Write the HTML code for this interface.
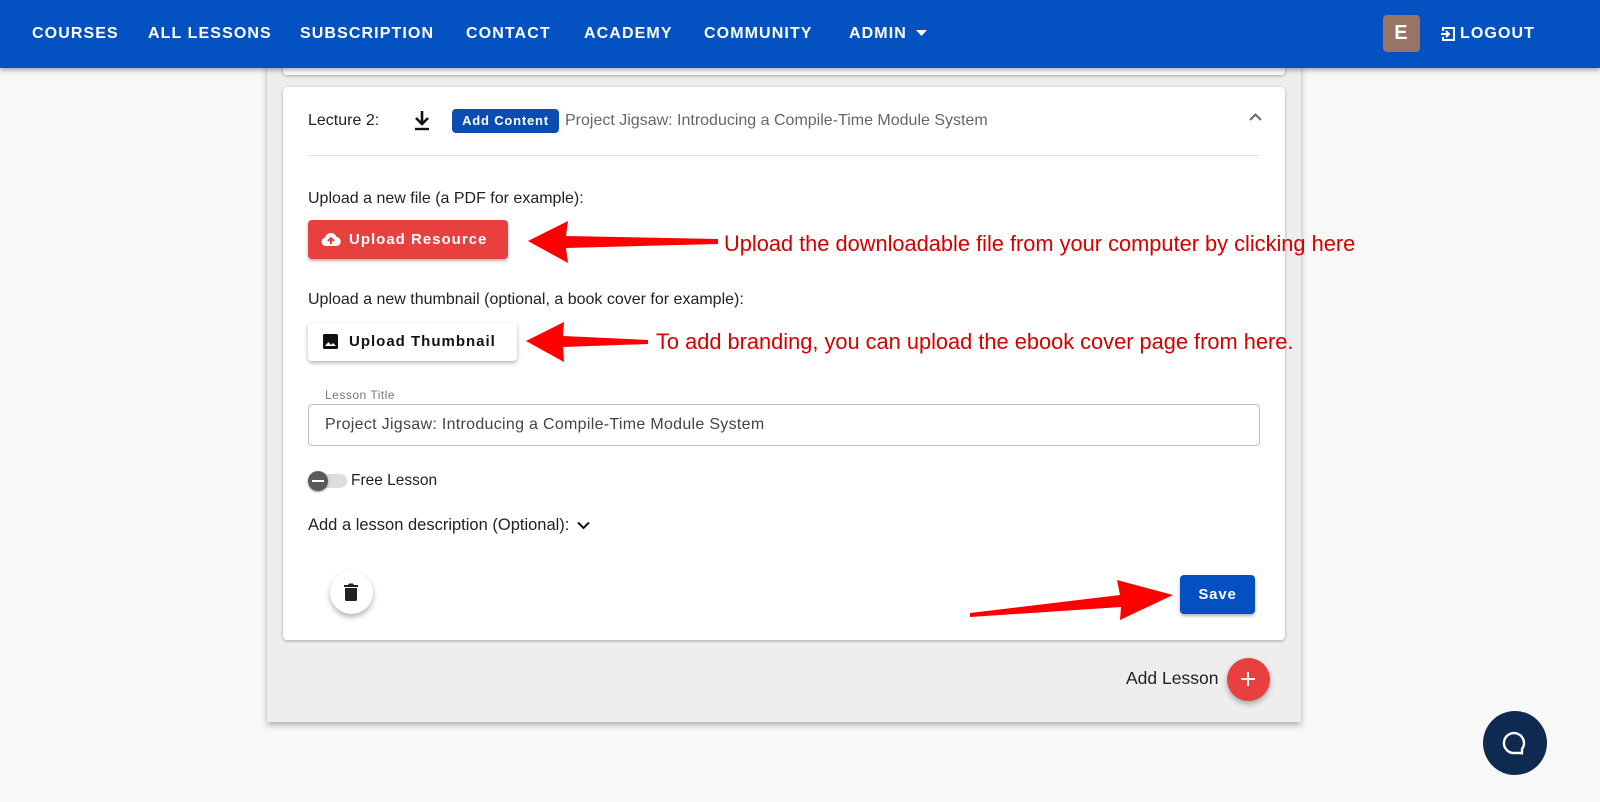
<!DOCTYPE html>
<html><head><meta charset="utf-8"><style>
*{box-sizing:border-box;margin:0;padding:0}
body{width:1600px;height:802px;overflow:hidden;background:#f8f8f8;font-family:"Liberation Sans",sans-serif;position:relative;color:#222}
.a{position:absolute;white-space:nowrap}
.nav{position:absolute;left:0;top:0;width:1600px;height:68px;background:#0451c1;box-shadow:0 2px 5px rgba(0,0,0,.35);z-index:5}
.nav .a{color:#fff;font-weight:bold;font-size:16px;letter-spacing:1.1px;top:25px}
.panel{position:absolute;left:267px;top:60px;width:1034px;height:662px;background:#eee;box-shadow:0 3px 6px rgba(0,0,0,.3)}
.card{position:absolute;background:#fff;border-radius:4px;box-shadow:0 1px 3px rgba(0,0,0,.3)}
.t15{font-size:16px}
.red{color:#d40000;font-size:21.8px}
</style></head><body>
<div class="nav">
<div class="a" style="left:32px">COURSES</div>
<div class="a" style="left:148px">ALL LESSONS</div>
<div class="a" style="left:300px">SUBSCRIPTION</div>
<div class="a" style="left:466px">CONTACT</div>
<div class="a" style="left:584px">ACADEMY</div>
<div class="a" style="left:704px">COMMUNITY</div>
<div class="a" style="left:849px">ADMIN</div>
<svg class="a" style="left:916px;top:30px" width="11" height="7"><path d="M0 0h11L5.5 6z" fill="#fff"/></svg>
<div class="a" style="left:1383px;top:15px;width:37px;height:37px;background:#977463;border-radius:4px;color:#fff;font-size:20px;text-align:center;line-height:37px">E</div>
<svg class="a" style="left:1440px;top:26px" width="16" height="16" viewBox="0 0 16 16"><path d="M3 5V2h11v12H3v-3" fill="none" stroke="#fff" stroke-width="2"/><path d="M1 8h8M6 5l3 3-3 3" fill="none" stroke="#fff" stroke-width="2"/></svg>
<div class="a" style="left:1460px">LOGOUT</div>
</div>
<div class="panel"></div>
<div class="card" style="left:283px;top:40px;width:1002px;height:35px"></div>
<div class="card" style="left:283px;top:87px;width:1002px;height:553px"></div>
<div class="a t15" style="left:308px;top:112px">Lecture 2:</div>
<svg class="a" style="left:413px;top:110px" width="18" height="22" viewBox="0 0 18 22"><path d="M9 1v12M3 8l6 6 6-6" fill="none" stroke="#111" stroke-width="2.6"/><path d="M2 19h14" stroke="#111" stroke-width="2.4"/></svg>
<div class="a" style="left:452px;top:109px;width:107px;height:24px;background:#0b4cb1;border-radius:4px;color:#fff;font-size:13px;font-weight:bold;letter-spacing:.8px;text-align:center;line-height:24px">Add Content</div>
<div class="a t15" style="left:565px;top:112px;color:#666">Project Jigsaw: Introducing a Compile-Time Module System</div>
<svg class="a" style="left:1249px;top:113px" width="13" height="9"><path d="M1 7l5.5-5.5L12 7" fill="none" stroke="#666" stroke-width="2"/></svg>
<div class="a" style="left:308px;top:155px;width:951px;height:1px;background:#e2e2e2"></div>
<div class="a t15" style="left:308px;top:190px">Upload a new file (a PDF for example):</div>
<div class="a" style="left:308px;top:220px;width:200px;height:39px;background:#e8403f;border-radius:4px;box-shadow:0 2px 3px rgba(0,0,0,.3);color:#fff;font-size:15px;font-weight:bold;letter-spacing:1px;line-height:39px;padding-left:41px">Upload Resource</div>
<svg class="a" style="left:321px;top:232px" width="20" height="15" viewBox="0 0 20 15"><path d="M5 14h10a4.5 4.5 0 0 0 .5-9A6 6 0 0 0 4 5.5 4.3 4.3 0 0 0 5 14z" fill="#fff"/><path d="M10 12V6M7 9l3-3 3 3" fill="none" stroke="#e8403f" stroke-width="2"/></svg>
<svg class="a" style="left:520px;top:215px" width="210" height="55"><path d="M8 26L48 6 46 21 198 24 198 29 46 33 48 48z" fill="#f00"/></svg>
<div class="a red" style="left:724px;top:231px">Upload the downloadable file from your computer by clicking here</div>
<div class="a t15" style="left:308px;top:291px">Upload a new thumbnail (optional, a book cover for example):</div>
<div class="a" style="left:308px;top:323px;width:209px;height:38px;background:#fff;border-radius:4px;box-shadow:0 2px 4px rgba(0,0,0,.3);color:#111;font-size:15px;font-weight:bold;letter-spacing:1px;line-height:38px;padding-left:41px">Upload Thumbnail</div>
<svg class="a" style="left:323px;top:334px" width="15" height="15" viewBox="0 0 15 15"><rect width="15" height="15" rx="1.5" fill="#111"/><path d="M2 12l3.5-4 2.5 3 2-2 3 3z" fill="#fff"/></svg>
<svg class="a" style="left:520px;top:317px" width="135" height="50"><path d="M6 24L44 5 43 19 128 23 128 27 43 30 44 45z" fill="#f00"/></svg>
<div class="a red" style="left:656px;top:329px">To add branding, you can upload the ebook cover page from here.</div>
<div class="a" style="left:308px;top:404px;width:952px;height:42px;border:1px solid #bbb;border-radius:4px"></div>
<div class="a" style="left:320px;top:388px;background:#fff;padding:0 5px;font-size:12px;color:#777;letter-spacing:.5px">Lesson Title</div>
<div class="a t15" style="left:325px;top:416px;color:#444;letter-spacing:.3px">Project Jigsaw: Introducing a Compile-Time Module System</div>
<div class="a" style="left:312px;top:474px;width:35px;height:14px;background:#ddd;border-radius:7px"></div>
<div class="a" style="left:308px;top:471px;width:20px;height:20px;background:#5a5a5a;border-radius:50%;box-shadow:0 1px 2px rgba(0,0,0,.4)"></div>
<div class="a" style="left:312px;top:480px;width:12px;height:2px;background:#fff"></div>
<div class="a" style="left:351px;top:472px;font-size:15.5px">Free Lesson</div>
<div class="a" style="left:308px;top:516px;font-size:16.5px">Add a lesson description (Optional):</div>
<svg class="a" style="left:577px;top:521px" width="13" height="9"><path d="M1 1.5l5.5 5.5L12 1.5" fill="none" stroke="#111" stroke-width="2"/></svg>
<div class="a" style="left:330px;top:571px;width:43px;height:43px;background:#fff;border-radius:50%;box-shadow:0 3px 6px rgba(0,0,0,.3)"></div>
<svg class="a" style="left:344px;top:583px" width="14" height="18" viewBox="0 0 14 18"><path d="M0 2h4l1-1.5h4L10 2h4v2H0z M1 5h12v11.5a1.5 1.5 0 0 1-1.5 1.5h-9A1.5 1.5 0 0 1 1 16.5z" fill="#222"/></svg>
<svg class="a" style="left:965px;top:575px" width="215" height="50"><path d="M5 38L155 20 152 5 208 20 155 45 156 32 5 42z" fill="#f00"/></svg>
<div class="a" style="left:1180px;top:575px;width:75px;height:39px;background:#0450c0;border-radius:4px;box-shadow:0 2px 3px rgba(0,0,0,.3);color:#fff;font-size:15px;font-weight:bold;letter-spacing:.8px;text-align:center;line-height:39px">Save</div>
<div class="a" style="left:1126px;top:668px;font-size:17.5px">Add Lesson</div>
<div class="a" style="left:1227px;top:658px;width:43px;height:43px;background:#e8403f;border-radius:50%;box-shadow:0 3px 6px rgba(0,0,0,.3)"></div>
<svg class="a" style="left:1240px;top:671px" width="16" height="16"><path d="M8 1v14M1 8h14" stroke="#fff" stroke-width="2"/></svg>
<div class="a" style="left:1483px;top:711px;width:64px;height:64px;background:#0f2a50;border-radius:50%"></div>
<svg class="a" style="left:1500px;top:728px" width="30" height="30" viewBox="0 0 30 30"><path d="M22 25.5V21A10 10 0 1 0 15 25h7z" fill="none" stroke="#fff" stroke-width="2.4" stroke-linejoin="round"/></svg>
</body></html>
